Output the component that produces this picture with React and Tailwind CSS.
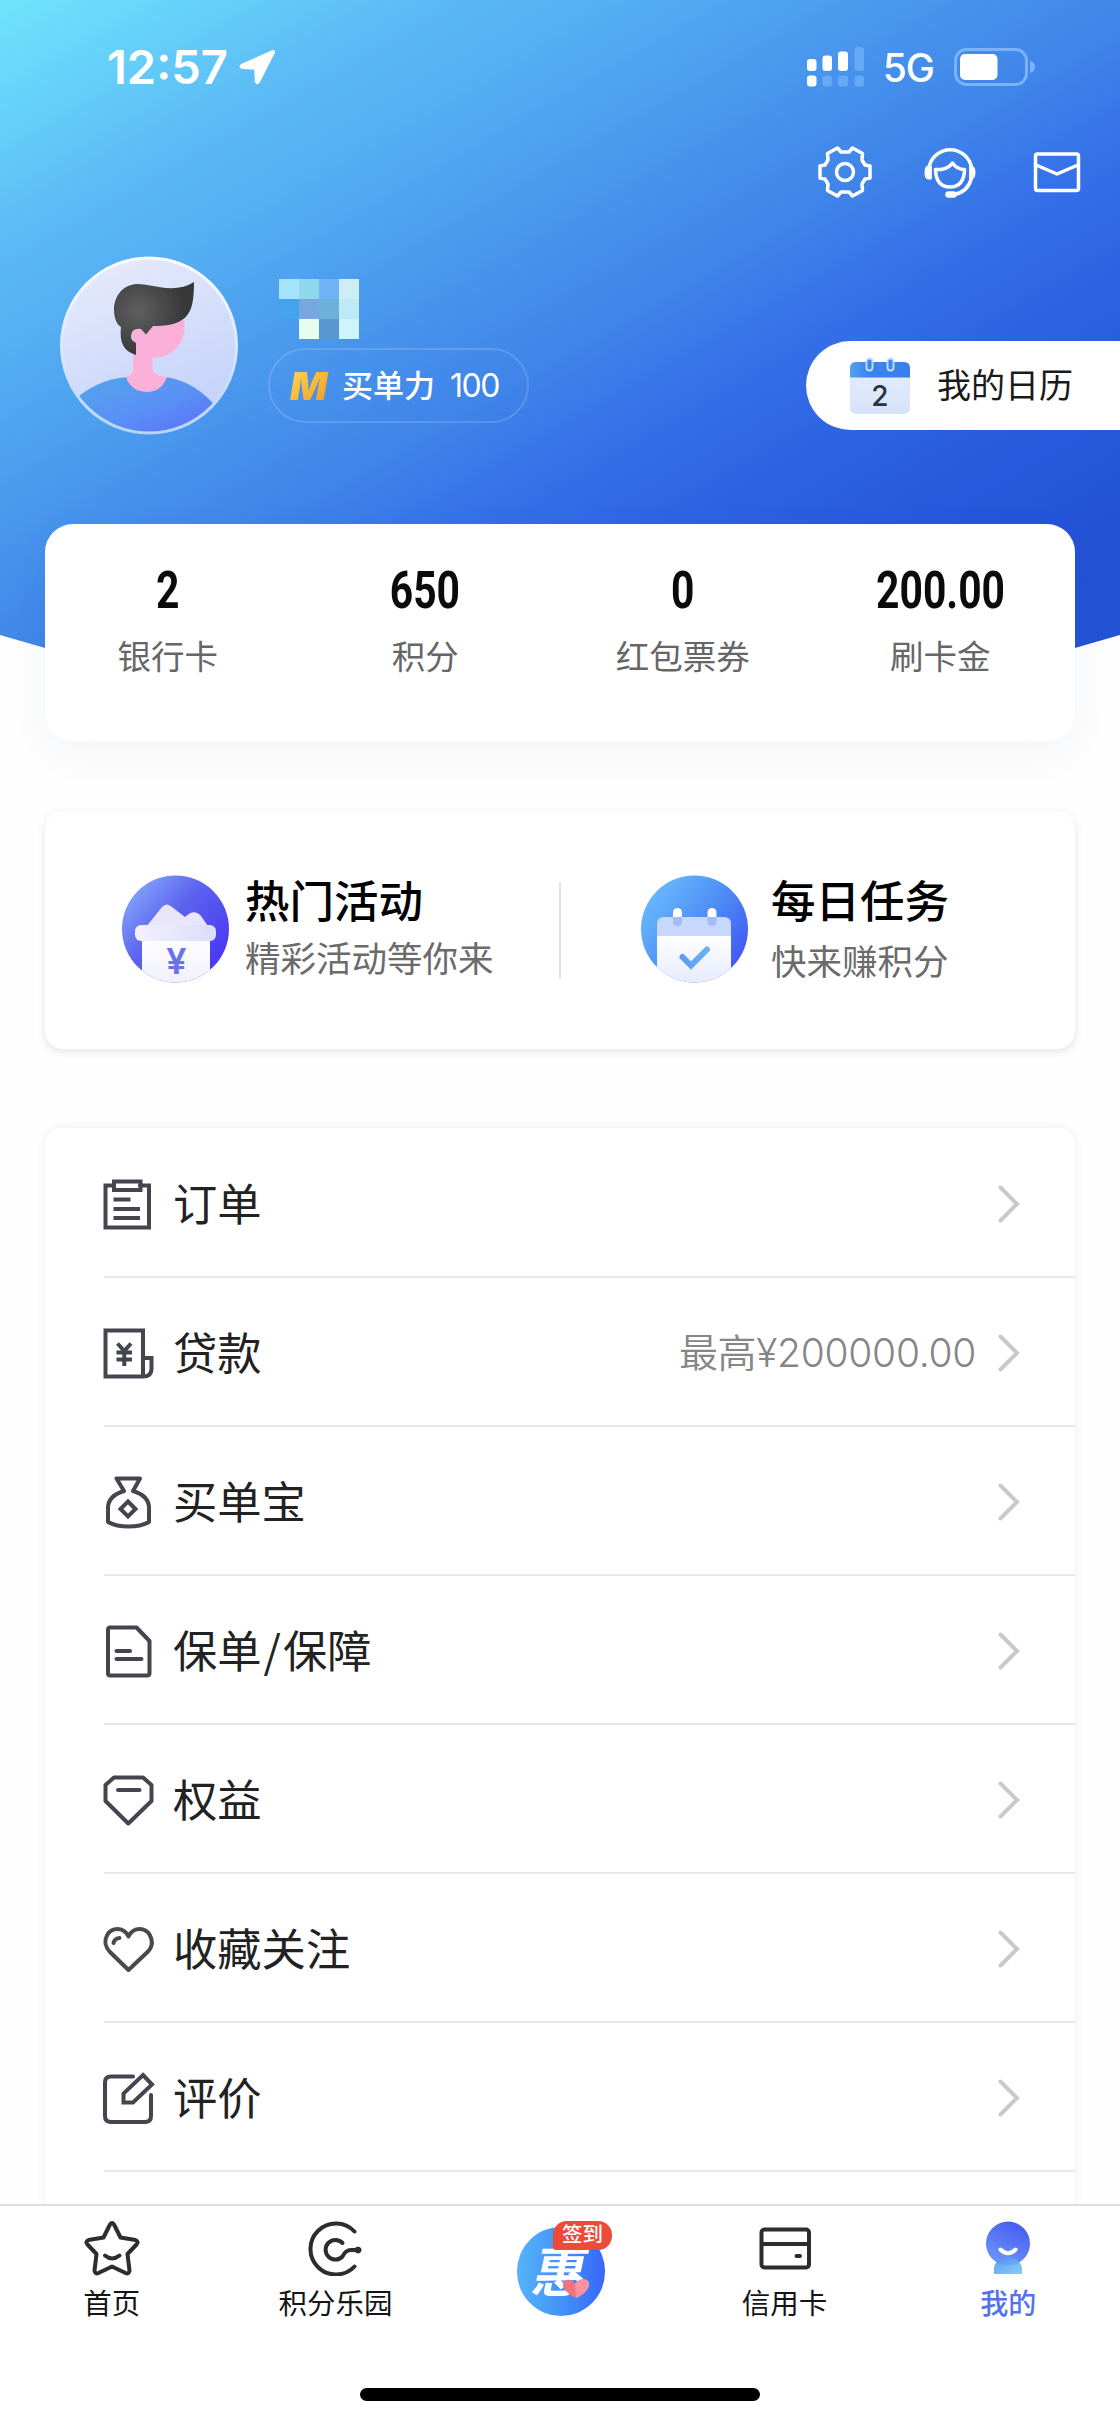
import React from "react";

const stroke = {
  fill: "none",
  stroke: "currentColor",
  strokeWidth: 4,
  strokeLinejoin: "round",
  strokeLinecap: "round",
};

function Icon({ children, className = "", ...rest }) {
  return (
    <svg viewBox="0 0 56 56" className={`h-14 w-14 shrink-0 ${className}`} {...stroke} {...rest}>
      {children}
    </svg>
  );
}

/* ---------- Status bar ---------- */

function StatusBar() {
  return (
    <div className="mt-[43px] flex h-12 shrink-0 items-center pr-[84px] pl-[107px]">
      <span className="text-[47px] leading-[48px] font-semibold">12:57</span>
      <svg viewBox="0 0 38 38" className="ml-[10px] h-[38px] w-[38px]">
        <path
          d="M35 4 L20 33.5 Q19 35 18.8 33 L18.2 19.8 L4.5 19 Q2.5 18.6 4.5 17.6 Z"
          fill="#fff"
          stroke="#fff"
          strokeWidth="4"
          strokeLinejoin="round"
        />
      </svg>
      <svg viewBox="0 0 58 40" className="ml-auto h-10 w-[58px]" fill="#fff">
        <rect x="0" y="12" width="9.5" height="12" rx="3" />
        <rect x="15.5" y="8.5" width="9.5" height="15.5" rx="3" />
        <rect x="31" y="4.5" width="10" height="19.5" rx="3" />
        <g fill="#6cb0f8" opacity=".8">
          <rect x="47.5" y="0" width="9.5" height="24" rx="3" />
          <rect x="15.5" y="28.5" width="9.5" height="11" rx="3" />
          <rect x="31" y="28.5" width="10" height="11" rx="3" />
          <rect x="47.5" y="28.5" width="9.5" height="11" rx="3" />
        </g>
        <rect x="0" y="28.5" width="9.5" height="11" rx="3" />
      </svg>
      <span className="ml-[18px] pt-[2px] text-[39px] leading-[48px] font-medium tracking-[-1px]">5G</span>
      <svg viewBox="0 0 82 38" className="ml-[20px] h-[38px] w-[82px]">
        <rect x="1.500" y="1.500" width="71" height="35" rx="11" fill="none" stroke="#7bb2f9" strokeWidth="3" />
        <rect x="6" y="6" width="37.500" height="26" rx="5" fill="#fff" />
        <path d="M76 13 Q81 14 81 19 Q81 24 76 25 Z" fill="#7bb2f9" />
      </svg>
    </div>
  );
}

function HeaderActions() {
  return (
    <div className="mt-[53px] flex h-14 shrink-0 items-center justify-end pr-[35px]">
      <Icon strokeWidth="3.500">
        <path d="M20.5 4 L24 8 H32 L35.5 4 L45.5 9.5 L45 16 L48 21 L53 22 V34 L48 35 L45 40 L45.5 46.5 L35.5 52 L32 48 H24 L20.5 52 L10.5 46.5 L11 40 L8 35 L3 34 V22 L8 21 L11 16 L10.5 9.5 Z" />
        <circle cx="28" cy="28" r="8.5" />
      </Icon>
      <Icon className="ml-[49px]" strokeWidth="3.500">
        <path d="M7 24 A21.5 21.5 0 0 1 49.5 24 M49.5 34 Q46 48 32 50.5" />
        <path d="M9 22 H6 Q3 22 3 28.5 Q3 35 6 35 H9 Z M48 22 H50 Q53 23 53 28.5 Q53 34 50 35 H48 Z" fill="currentColor" strokeWidth="1" />
        <rect x="24" y="48" width="10" height="5" rx="2.5" fill="currentColor" strokeWidth="1.5" />
        <path d="M13.5 25.5 H19 Q27 24 30.5 19 Q35 25.5 42.5 25.5 Q42 43 28 43 Q14 43 13.5 25.5 Z" />
      </Icon>
      <Icon className="ml-[51px]" strokeWidth="3.500">
        <rect x="6.500" y="10" width="43" height="36.500" rx="2" />
        <path d="M7 21 L28 30 L49 21" />
      </Icon>
    </div>
  );
}

/* ---------- Profile ---------- */

function Avatar() {
  return (
    <svg viewBox="0 0 179 179" className="h-[179px] w-[179px] shrink-0">
      <defs>
        <linearGradient id="avBg" x1="0" y1="0" x2=".4" y2="1">
          <stop offset="0" stopColor="#e9ecfb" />
          <stop offset="1" stopColor="#c5d3fb" />
        </linearGradient>
        <linearGradient id="avBody" x1="0" y1="0" x2="1" y2="1">
          <stop offset="0" stopColor="#50a6ea" />
          <stop offset=".5" stopColor="#5a92f6" />
          <stop offset="1" stopColor="#5a6cf8" />
        </linearGradient>
        <radialGradient id="avHair" cx=".3" cy=".4" r=".6">
          <stop offset="0" stopColor="#606060" />
          <stop offset="1" stopColor="#383838" />
        </radialGradient>
        <linearGradient id="avRing" x1="0" y1="0" x2="0" y2="1">
          <stop offset="0" stopColor="#fbfdff" />
          <stop offset="1" stopColor="#b9d5fb" />
        </linearGradient>
        <clipPath id="avClip">
          <circle cx="89.500" cy="89.500" r="88" />
        </clipPath>
      </defs>
      <circle cx="89" cy="89.500" r="87.500" fill="url(#avBg)" />
      <g clipPath="url(#avClip)">
        <path d="M8 150 Q34 123 68 121 H106 Q138 126 160 156 V179 H8 Z" fill="url(#avBody)" />
        <path
          d="M73 90 V114 Q73 119 66 121 Q71 136 88 136 Q102 135 107 121 Q93 120 92.500 112 V102 Q111 102 121 86 Q126 76 124 64 L84 64 L72 76 Z"
          fill="#fbb0d9"
        />
        <path
          d="M134 26 Q120 35 99 31 Q83 28 77 28 C61 29 54 42 54 54 C54 64 58 69 61 71 Q58 94 76 99 V87 Q69 84 72 76 Q75 72 81 73 L86 78.500 L93 70 Q105 70 113 68 C131 63 134 50 134 26 Z"
          fill="url(#avHair)"
        />
      </g>
      <circle cx="89" cy="89.500" r="87.500" fill="none" stroke="url(#avRing)" strokeWidth="3" />
    </svg>
  );
}

function MaskedName() {
  return (
    <div className="ml-[11px] grid h-[60px] w-20 grid-cols-4 grid-rows-3">
      <i className="bg-[#a6e4fe]" />
      <i className="bg-[#8edaec]" />
      <i className="bg-[#70b4f6]" />
      <i className="bg-[#cfedf5]" />
      <i className="bg-[#46a4ef]" />
      <i className="bg-[#76a8dd]" />
      <i className="bg-[#6db2da]" />
      <i className="bg-[#bdeaf6]" />
      <i />
      <i className="bg-[#e6fff0]" />
      <i className="bg-[#5797d1]" />
      <i className="bg-[#cff5fc]" />
    </div>
  );
}

function CalendarIcon() {
  return (
    <svg viewBox="0 0 60 58" className="h-[58px] w-[60px] shrink-0">
      <defs>
        <linearGradient id="calTop" x1="0" x2="1">
          <stop offset="0" stopColor="#4fa3f3" />
          <stop offset=".3" stopColor="#3c84f0" />
          <stop offset="1" stopColor="#3a7eee" />
        </linearGradient>
        <linearGradient id="calBody" x1="0" y1="0" x2="0" y2="1">
          <stop offset="0" stopColor="#e7effd" />
          <stop offset="1" stopColor="#d7e2fb" />
        </linearGradient>
      </defs>
      <rect x="0" y="5" width="60" height="52" rx="6" fill="url(#calBody)" />
      <path d="M0 20.500 V11 Q0 5 6 5 H54 Q60 5 60 11 V20.500 Z" fill="url(#calTop)" />
      <rect x="16.500" y="1.500" width="6" height="12" rx="3" fill="#3f86ef" stroke="#bfe0fb" strokeWidth="1.800" />
      <rect x="37.500" y="1.500" width="6" height="12" rx="3" fill="#3f86ef" stroke="#bfe0fb" strokeWidth="1.800" />
      <text x="30" y="48.500" textAnchor="middle" fontSize="28" fontWeight="500" fill="#2c3340">2</text>
    </svg>
  );
}

function Profile() {
  return (
    <div className="mt-[56px] flex items-start pl-[60px]">
      <Avatar />
      <div className="ml-[29px] flex flex-col pt-[23px]">
        <MaskedName />
        <div className="mt-[9px] flex h-[75px] w-[261px] items-center rounded-full border-2 border-white/15 pl-5">
          <span className="w-[44px] bg-gradient-to-br from-[#ffd65c] via-[#f6b836] to-[#e88f2a] bg-clip-text text-[39px] leading-[40px] font-black text-transparent italic">
            M
          </span>
          <span className="ml-[8px] text-[31px] leading-10 font-medium">买单力</span>
          <span className="ml-[15px] text-[32px] leading-10 tracking-[-1.500px]">100</span>
        </div>
      </div>
      <div className="mt-[85px] ml-auto flex h-[89px] w-[314px] items-center rounded-l-full bg-white pl-[44px] text-[#1a1a1a]">
        <CalendarIcon />
        <span className="ml-[27px] text-[34px] leading-[50px]">我的日历</span>
      </div>
    </div>
  );
}

/* ---------- Cards ---------- */

const stats = [
  ["2", "银行卡"],
  ["650", "积分"],
  ["0", "红包票券"],
  ["200.00", "刷卡金"],
];

function Stats() {
  return (
    <section className="relative mx-[45px] -mt-[191px] h-[217px] shrink-0 rounded-[28px] bg-white pt-[41px] pr-[6px] shadow-[0_12px_40px_rgba(40,60,120,0.05)]">
      <div className="-ml-[6px] grid w-[1030px] grid-cols-4">
        {stats.map(([value, label]) => (
          <div key={label} className="flex flex-col items-center">
            <span className="scale-x-[.8] font-[Roboto] text-[51px] leading-[52px] font-bold text-[#0b0b0b]">{value}</span>
            <span className="mt-[20px] text-[33.500px] leading-10 text-[#666]">{label}</span>
          </div>
        ))}
      </div>
    </section>
  );
}

function ActivityIcon() {
  return (
    <svg viewBox="0 0 107 108" className="h-[108px] w-[107px] shrink-0">
      <defs>
        <linearGradient id="actBg" x1=".1" y1=".1" x2=".9" y2=".8">
          <stop offset="0" stopColor="#83a4fb" />
          <stop offset=".45" stopColor="#5b62ee" />
          <stop offset="1" stopColor="#4a39f4" />
        </linearGradient>
        <linearGradient id="actLid" x1="0" x2="1">
          <stop offset="0" stopColor="#f3f1fd" />
          <stop offset="1" stopColor="#dcdcfb" />
        </linearGradient>
        <linearGradient id="actBox" x1="0" y1="0" x2="0" y2="1">
          <stop offset="0" stopColor="#fff" />
          <stop offset="1" stopColor="#f0f0fe" />
        </linearGradient>
        <clipPath id="actClip">
          <circle cx="53.500" cy="54" r="53.500" />
        </clipPath>
      </defs>
      <g clipPath="url(#actClip)">
        <rect width="107" height="108" fill="url(#actBg)" />
        <path d="M24 52 L40 32 Q45 27 50 32 L63 42 Q72 33 79 41 L88 54 Z" fill="#e9e6fb" />
        <rect x="20" y="60" width="68" height="48" fill="url(#actBox)" />
        <rect x="13" y="50" width="81" height="16" rx="6" fill="url(#actLid)" />
        <text x="54.500" y="99" textAnchor="middle" fontSize="36" fontWeight="600" fill="#6a72ee">¥</text>
      </g>
    </svg>
  );
}

function TaskIcon() {
  return (
    <svg viewBox="0 0 107 108" className="h-[108px] w-[107px] shrink-0">
      <defs>
        <linearGradient id="taskBg" x1=".1" y1=".2" x2=".9" y2=".8">
          <stop offset="0" stopColor="#66b6fb" />
          <stop offset=".5" stopColor="#4f8ff6" />
          <stop offset="1" stopColor="#415bf6" />
        </linearGradient>
        <linearGradient id="taskBox" x1="0" y1="0" x2="0" y2="1">
          <stop offset="0" stopColor="#fff" />
          <stop offset="1" stopColor="#e6ebfe" />
        </linearGradient>
        <linearGradient id="taskTick" x1="0" x2="1">
          <stop offset="0" stopColor="#5c9cf0" />
          <stop offset="1" stopColor="#68b2f8" />
        </linearGradient>
        <clipPath id="taskClip">
          <circle cx="53.500" cy="54" r="53.500" />
        </clipPath>
      </defs>
      <g clipPath="url(#taskClip)">
        <rect width="107" height="108" fill="url(#taskBg)" />
        <rect x="32" y="33" width="9" height="18" rx="4.500" fill="#fff" />
        <rect x="66.500" y="33" width="9" height="18" rx="4.500" fill="#fff" />
        <path d="M16 62 V49 Q16 42 23 42 H83 Q90 42 90 49 V62 Z" fill="#c6d8fc" />
        <path d="M32 42 H41 V46.500 Q41 51 36.500 51 Q32 51 32 46.500 Z M66.500 42 H75.500 V46.500 Q75.500 51 71 51 Q66.500 51 66.500 46.500 Z" fill="#a3bcf6" />
        <rect x="16" y="61" width="74" height="47" fill="url(#taskBox)" />
        <path d="M41.500 82 L50 90.500 L66 74.500" fill="none" stroke="url(#taskTick)" strokeWidth="6" strokeLinecap="round" />
      </g>
    </svg>
  );
}

function Promos() {
  return (
    <section className="mx-[45px] mt-[70px] flex h-[238px] shrink-0 items-start rounded-[18px] bg-white pt-[64px] shadow-[0_3px_10px_rgba(0,0,0,0.10)]">
      <div className="flex w-[514px] pl-[77px]">
        <ActivityIcon />
        <div className="ml-[16px] flex flex-col">
          <span className="text-[44.500px] leading-[54px] font-medium text-black">热门活动</span>
          <span className="mt-[7px] text-[35.500px] leading-[48px] text-[#6b6b6b]">精彩活动等你来</span>
        </div>
      </div>
      <div className="mt-[7px] h-[97px] w-[2px] bg-[#e4e4e6]" />
      <div className="flex pl-20">
        <TaskIcon />
        <div className="ml-[23px] flex flex-col">
          <span className="text-[44.500px] leading-[54px] font-medium text-black">每日任务</span>
          <span className="mt-[10px] text-[35.500px] leading-[48px] text-[#6b6b6b]">快来赚积分</span>
        </div>
      </div>
    </section>
  );
}

/* ---------- Menu list ---------- */

const menu = [
  {
    label: "订单",
    icon: (
      <Icon strokeLinejoin="miter">
        <path d="M14 9.500 H5.500 V51.500 H49 V9.500 H40" />
        <rect x="14" y="5.500" width="26.500" height="8.500" />
        <path d="M13.500 23.500 H30.500 M13.500 33 H40 M13.500 42 H40" strokeLinecap="butt" />
      </Icon>
    ),
  },
  {
    label: "贷款",
    extra: "最高¥200000.00",
    icon: (
      <Icon strokeLinejoin="miter">
        <path d="M5.500 5.500 H43 V51.500 H5.500 Z M43 33 H51.500 V44 Q51.500 51.500 43 51.500" />
        <path d="M17.500 18.500 L24.300 26 L31 18.500 M24.300 26 V41 M16.500 27.500 H32 M16.500 34.500 H32" strokeLinecap="butt" />
      </Icon>
    ),
  },
  {
    label: "买单宝",
    icon: (
      <Icon>
        <path d="M16.500 4.500 H40 L33 17 C43 20 49 25 49 34 V48 Q41 52.500 28.500 52.500 Q16 52.500 8 48 V34 C8 25 14 20 24 17 Z" />
        <path d="M28 27.500 L35.500 35 L28 42.500 L20.500 35 Z" strokeLinejoin="miter" />
      </Icon>
    ),
  },
  {
    label: (
      <>
        保单<span className="px-[2px]">/</span>保障
      </>
    ),
    icon: (
      <Icon>
        <path d="M10 4.500 H36.500 L49.500 18 V50 Q49.500 52.500 47 52.500 H10 Q8 52.500 8 50 V7 Q8 4.500 10 4.500 Z" />
        <path d="M16.500 28 H30 M16.500 36 H41.500" />
      </Icon>
    ),
  },
  {
    label: "权益",
    icon: (
      <Icon>
        <path d="M14 5.500 H43 L51.500 13 V29 L28.300 51.500 L5.500 29 V13 Z" />
        <path d="M18 18 H39.500" />
      </Icon>
    ),
  },
  {
    label: "收藏关注",
    icon: (
      <Icon stroke="#4a4a4a">
        <path d="M28.500 15.500 C24 5.500 12 6 7.500 13.500 C3.500 20.500 6 27 10 31 L28.500 49 L47.500 31 C52 26.500 53.500 20.500 49.500 13.500 C45 6 33 5.500 28.500 15.500 Z" />
        <path d="M13.500 22 Q14.500 17.500 19.500 17" />
      </Icon>
    ),
  },
  {
    label: "评价",
    icon: (
      <Icon>
        <path d="M33 6.500 H11 Q5 6.500 5 12.500 V46 Q5 52 11 52 H45 Q51 52 51 46 V25" />
        <path d="M43 5 L52 14.500 L33 32.500 H23.500 V23.500 Z" strokeLinejoin="miter" />
      </Icon>
    ),
  },
];

function Menu() {
  return (
    <section className="mx-[45px] mt-[79px] h-[1076px] shrink-0 rounded-t-2xl bg-white pt-px shadow-[0_0_8px_rgba(0,0,0,0.08)]">
      {menu.map(({ label, extra, icon }, index) => (
        <div key={index} className="ml-[55px]">
          <div className="flex h-[147px] items-center pt-[2px] pr-[54px] text-[#45454f]">
            {icon}
            <span className="ml-[17px] pb-1 font-['Noto_Sans_CJK_SC',sans-serif] text-[44.300px] leading-[60px] text-[#222]">{label}</span>
            <span className="ml-auto text-[39px] leading-[60px] font-[350] tracking-[-0.300px] text-[#868686]">{extra}</span>
            <svg viewBox="0 0 24 40" className="ml-[21px] h-10 w-6" fill="none" stroke="#c9c9c9" strokeWidth="4" strokeLinecap="round">
              <path d="M3.500 3.500 L20 20 L3.500 36.500" />
            </svg>
          </div>
          <div className="ml-1 h-[2px] bg-[#e9e9e9]" />
        </div>
      ))}
    </section>
  );
}

/* ---------- Bottom navigation ---------- */

function TabItem({ label, active, children }) {
  return (
    <div className="flex flex-1 flex-col items-center pt-[14px] text-[#2d2d2d]">
      {children}
      <span className={active ? "mt-[10px] text-[28px] leading-9 font-medium text-[#5272f2]" : "mt-[10px] text-[28.500px] leading-9 text-[#151515]"}>
        {label}
      </span>
    </div>
  );
}

function TabBar() {
  return (
    <nav className="relative h-[218px] shrink-0 border-t-2 border-[#dfdfdf] bg-white">
      <div className="flex h-[182px]">
        <TabItem label="首页">
          <Icon>
            <path d="M26 4.500 Q28 1.500 30 4.500 L36.500 17.500 L51.500 20 Q55 21.500 52.500 24.500 L43.500 34 L45.500 50.500 Q45 54.500 41.500 53 L28 46.500 L14.500 53 Q11 54.500 10.500 50.500 L12.500 34 L3.500 24.500 Q1 21.500 4.500 20 L19.500 17.500 Z" />
            <path d="M21 35.500 Q28 41.500 35.500 35.500" />
          </Icon>
        </TabItem>
        <TabItem label="积分乐园">
          <Icon>
            <path d="M47.500 11.500 A25.500 25.500 0 1 0 47.500 46.500" />
            <path d="M35.500 23 A9.800 9.800 0 1 0 35.500 36.500 Q38.500 30 44 30 H50" />
            <circle cx="51" cy="30" r="3" fill="currentColor" strokeWidth="1" />
          </Icon>
        </TabItem>
        <div className="flex flex-1 justify-center pt-[21px] pl-[2px]">
          <div className="relative flex h-[89px] w-[88px] items-center justify-center rounded-full bg-gradient-to-r from-[#55b4f9] via-[#4492f8] to-[#3a66fb]">
            <span className="mt-[2px] -skew-x-12 text-[54px] leading-[60px] font-bold text-white">惠</span>
            <svg viewBox="0 0 28 20" className="absolute top-[52px] left-[45px] h-5 w-7">
              <path d="M14 19 C6 15 0 10 1 5 C2 0 9 -1 13 5 C17 -1 26 -1 27 4 C28 10 21 16 14 19 Z" fill="#f4727c" />
              <path d="M13 5 C17 -1 26 -1 27 4 C28 10 21 16 14 19 Z" fill="#f893a0" />
            </svg>
            <span className="absolute -top-[6px] left-[36px] flex h-[29px] w-[59px] items-center justify-center rounded-[14px] rounded-bl-[3px] bg-[#ee4a38] text-[20.500px] leading-none font-medium text-white">
              签到
            </span>
          </div>
        </div>
        <TabItem label="信用卡">
          <Icon>
            <rect x="4.500" y="9.500" width="47.500" height="38" rx="3" />
            <path d="M5 24 H52" />
            <path d="M39.500 36 H43" />
          </Icon>
        </TabItem>
        <TabItem label="我的" active>
          <svg viewBox="0 0 56 56" className="h-14 w-14">
            <defs>
              <linearGradient id="meHead" x1=".8" y1="0" x2=".3" y2="1">
                <stop offset="0" stopColor="#4659ee" />
                <stop offset="1" stopColor="#6d96fc" />
              </linearGradient>
              <linearGradient id="meBody" x1="0" y1="0" x2="1" y2="1">
                <stop offset="0" stopColor="#4f8ff2" />
                <stop offset="1" stopColor="#78c8f9" />
              </linearGradient>
            </defs>
            <circle cx="28" cy="23.500" r="22" fill="url(#meHead)" />
            <path d="M14 54 V48 C16 34 40 34 42 48 V54 Z" fill="url(#meBody)" opacity=".9" />
            <path d="M20.500 29.500 Q28 37 35.500 29.500" fill="none" stroke="#fff" strokeWidth="4" strokeLinecap="round" />
          </svg>
        </TabItem>
      </div>
      <div className="mx-auto h-[13px] w-[400px] rounded-full bg-black" />
    </nav>
  );
}

export default function App() {
  return (
    <main
      lang="zh-CN"
      className="flex h-[2422px] w-[1120px] flex-col overflow-hidden bg-[#fefefe] font-[Inter,'Noto_Sans_CJK_SC',sans-serif]"
    >
      <header className="flex h-[715px] shrink-0 flex-col bg-[linear-gradient(150deg,#6ee4fb_0%,#66d3fa_8%,#5cbaf5_18%,#55aff2_26%,#4691ec_42%,#3f84e9_50%,#3571e9_58%,#2e65e3_66%,#2758dd_77%,#2352d5_86%,#2352d5_100%)] text-white [clip-path:ellipse(1218px_715px_at_50%_0)]">
        <StatusBar />
        <HeaderActions />
        <Profile />
      </header>
      <Stats />
      <Promos />
      <Menu />
      <TabBar />
    </main>
  );
}
